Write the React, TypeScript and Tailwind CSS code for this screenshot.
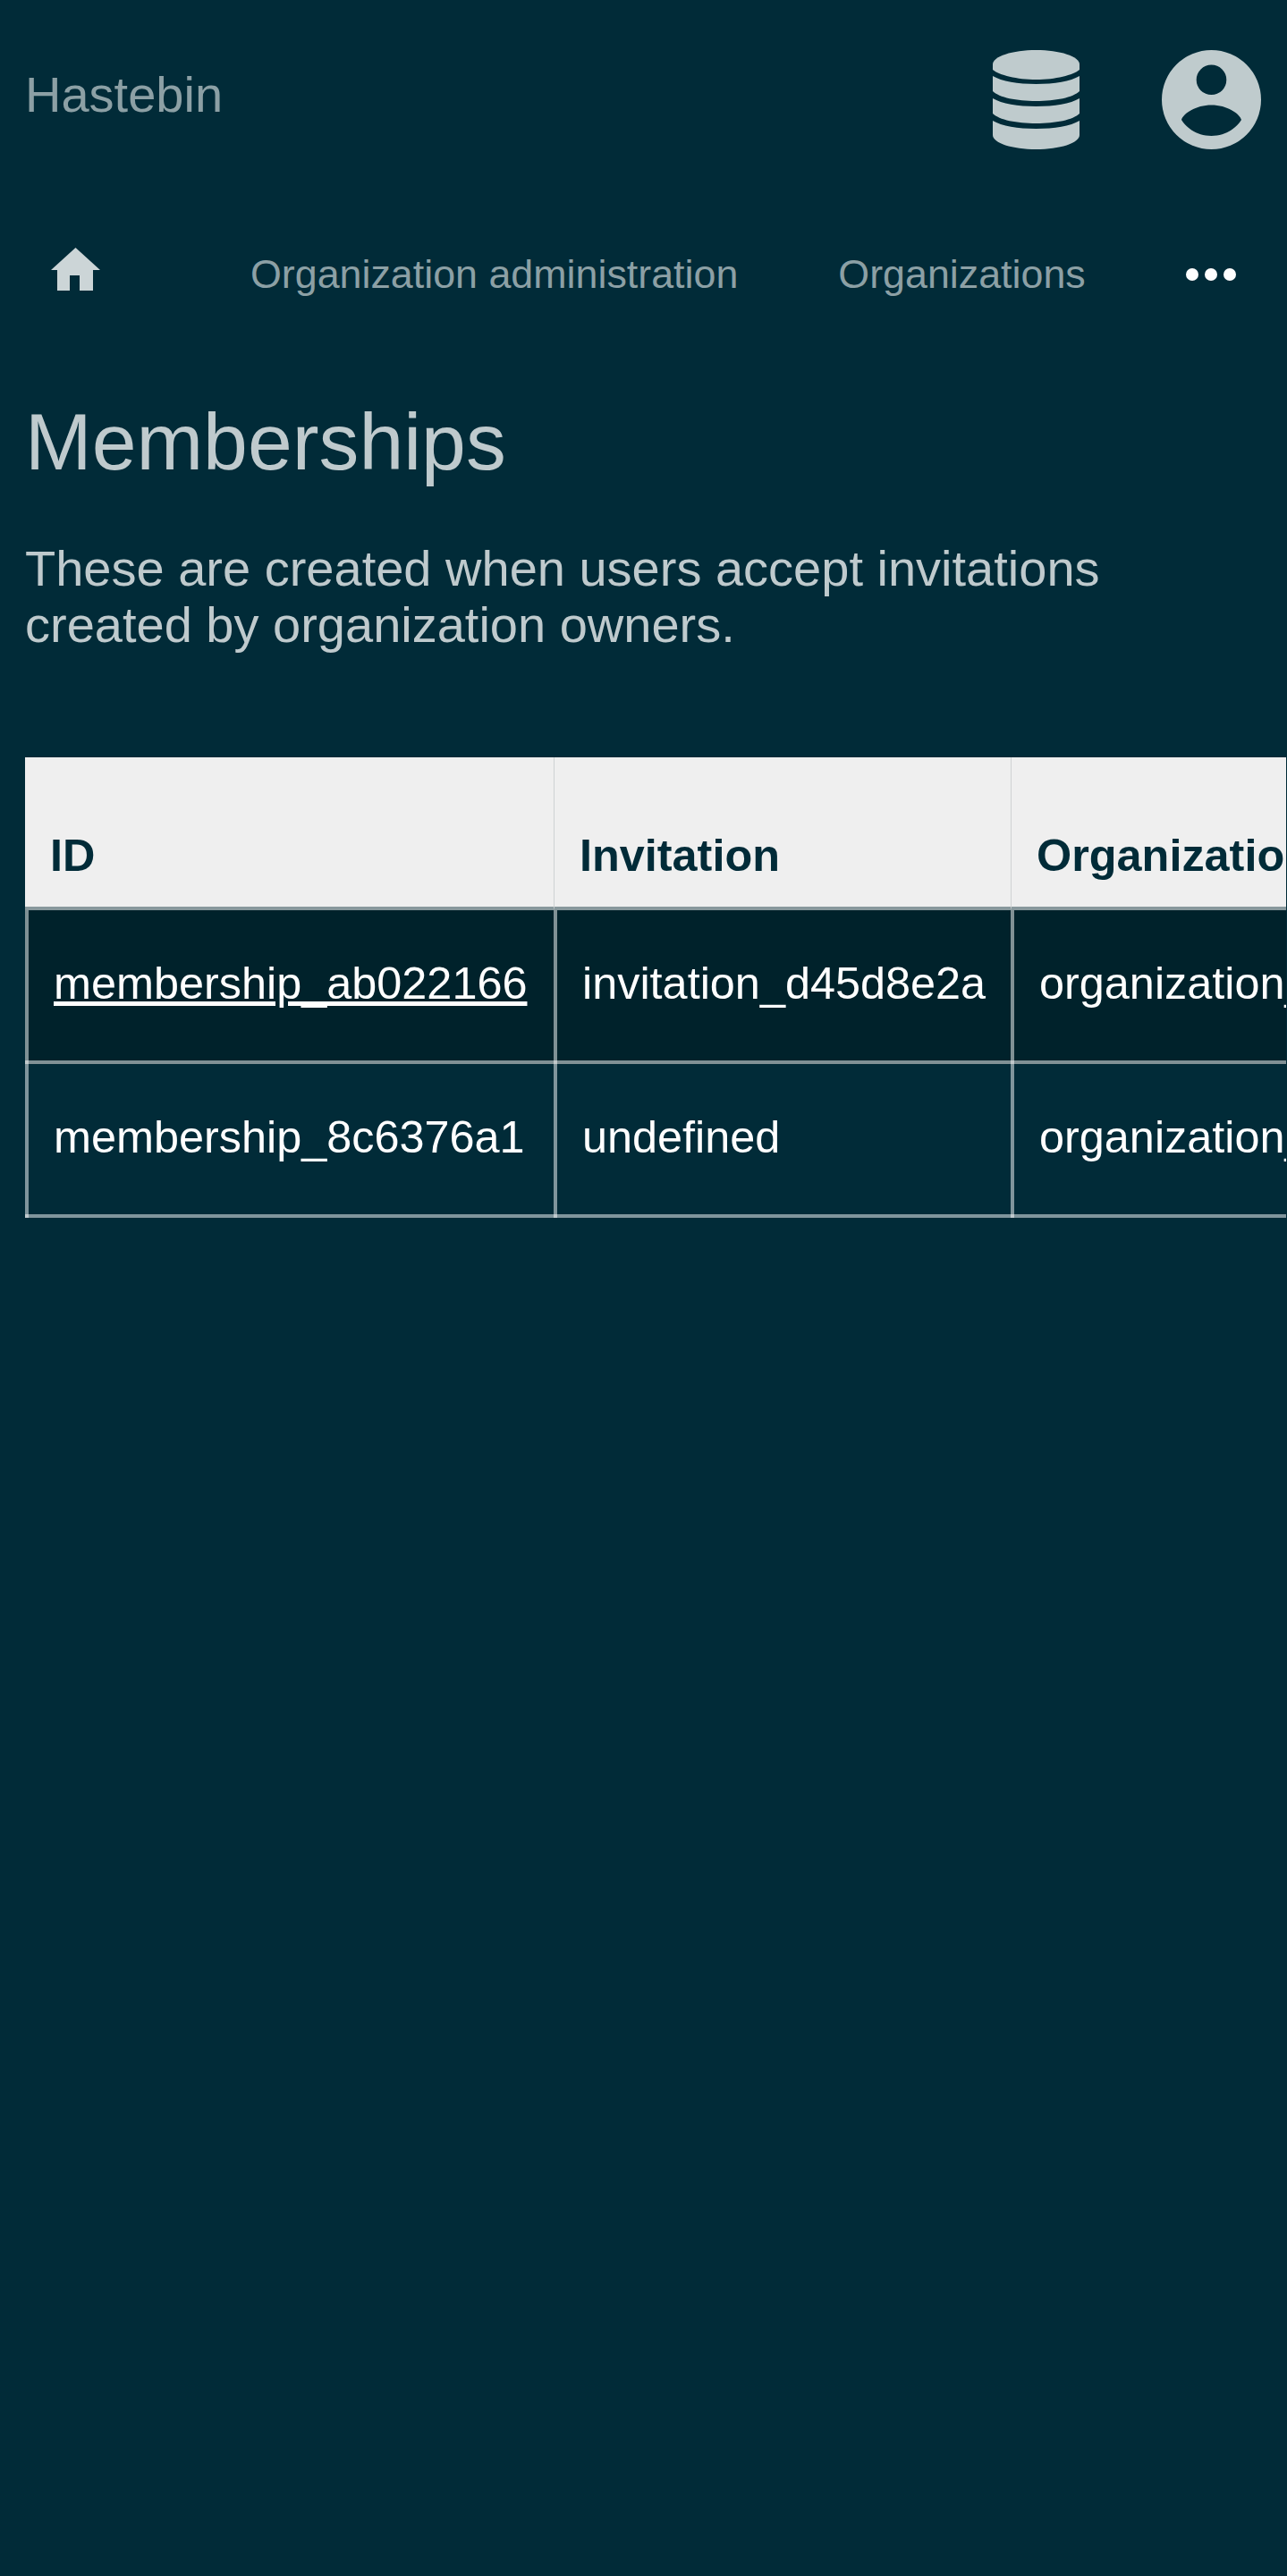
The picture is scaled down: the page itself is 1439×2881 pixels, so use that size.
const rows = [
  {
    id: "membership_ab022166",
    invitation: "invitation_d45d8e2a",
    organization: "organization_5fb1c7a3",
    linked: true,
  },
  {
    id: "membership_8c6376a1",
    invitation: "undefined",
    organization: "organization_5fb1c7a3",
    linked: false,
  },
];

const DatabaseIcon = () => (
  <svg viewBox="0 0 97 111" className="h-[111px] w-[97px] fill-[#bfcbcd]">
    <path d="M0 16C0 7 22 0 48.5 0S97 7 97 16V22C90 28 70 33 48.5 33S7 28 0 22Z" />
    <path d="M0 29C10 35 28 38 48.5 38S87 35 97 29V46C90 53 70 57 48.5 57S7 53 0 46Z" />
    <path d="M0 54C10 60 28 63 48.5 63S87 60 97 54V71C90 78 70 82 48.5 82S7 78 0 71Z" />
    <path d="M0 79C10 85 28 88 48.5 88S87 85 97 79V95C97 104 75 111 48.5 111S0 104 0 95Z" />
  </svg>
);

const UserIcon = () => (
  <svg viewBox="0 0 111 111" className="h-[111px] w-[111px] fill-[#bfcbcd]">
    <path
      fillRule="evenodd"
      d="M55.5 0a55.5 55.5 0 1 0 0 111a55.5 55.5 0 1 0 0-111ZM55.5 16.5a16.8 16.8 0 1 1 0 33.6a16.8 16.8 0 1 1 0-33.6ZM22 78C24 71 38 61.5 55.5 61.5S87 71 89 78C85 85 73 96 55.5 96S26 85 22 78Z"
    />
  </svg>
);

const HomeIcon = () => (
  <svg viewBox="0 0 55 48" className="h-12 w-[55px] fill-[#ccd5d7]">
    <path d="M27.5 0L55 25H47V48H32V31H21V48H7V25H0Z" />
  </svg>
);

const cell =
  "relative border-l-4 border-b-4 border-white/50 pl-7 pb-1 after:absolute after:-left-1 after:-bottom-1 after:h-1 after:w-1 after:bg-white/50";

const App = () => {
  return (
    <div className="min-h-[2881px] bg-[#012b38] font-['Liberation_Sans',sans-serif]">
      <header className="flex items-center justify-between pt-14 pl-7 pr-[29px]">
        <span className="mb-[11px] text-[56px] leading-[100px] text-[#8ca0a5]">Hastebin</span>
        <div className="flex items-center gap-[92px]">
          <DatabaseIcon />
          <UserIcon />
        </div>
      </header>

      <nav className="mt-[108px] flex h-16 items-center">
        <div className="ml-[57px] mr-[168px] mb-3">
          <HomeIcon />
        </div>
        <span className="mr-28 text-[44.8px] text-[#8ca0a5]">Organization administration</span>
        <span className="mr-[114px] text-[44.8px] text-[#8ca0a5]">Organizations</span>
        <div className="-ml-0.5 flex gap-[7px]">
          <span className="h-3.5 w-3.5 rounded-full bg-white" />
          <span className="h-3.5 w-3.5 rounded-full bg-white" />
          <span className="h-3.5 w-3.5 rounded-full bg-white" />
        </div>
      </nav>

      <main className="pl-7 pt-[105px]">
        <h1 className="text-[89.6px] leading-[100px] text-[#bfcacd]">Memberships</h1>
        <p className="mt-[60px] w-[1300px] text-[56px] leading-[63px] text-[#bfcacd]">
          These are created when users accept invitations created by organization owners.
        </p>

        <div className="mt-[117px] mr-px overflow-hidden">
          <table className="w-[1700px] table-fixed border-separate border-spacing-0 text-left text-[50.4px]">
            <thead>
              <tr className="h-[171px] bg-[#efefef] align-bottom text-[#012b38]">
                <th className="w-[591px] border-b-4 border-b-[#88989c] pl-7 pb-[19px] font-bold">ID</th>
                <th className="w-[511px] border-l border-l-[#cfd2d3] border-b-4 border-b-[#88989c] pl-7 pb-[19px] font-bold">Invitation</th>
                <th className="border-l border-l-[#cfd2d3] border-b-4 border-b-[#88989c] pl-7 pb-[19px] font-bold">Organization</th>
              </tr>
            </thead>
            <tbody className="text-white">
              {rows.map((row) => (
                <tr key={row.id} className={`h-[172px] ${row.linked ? "bg-[#00222b]" : ""}`}>
                  <td className={cell}>
                    {row.linked ? <a className="underline">{row.id}</a> : row.id}
                  </td>
                  <td className={cell}>{row.invitation}</td>
                  <td className={cell}>{row.organization}</td>
                </tr>
              ))}
            </tbody>
          </table>
        </div>
      </main>
    </div>
  );
};

export default App;
